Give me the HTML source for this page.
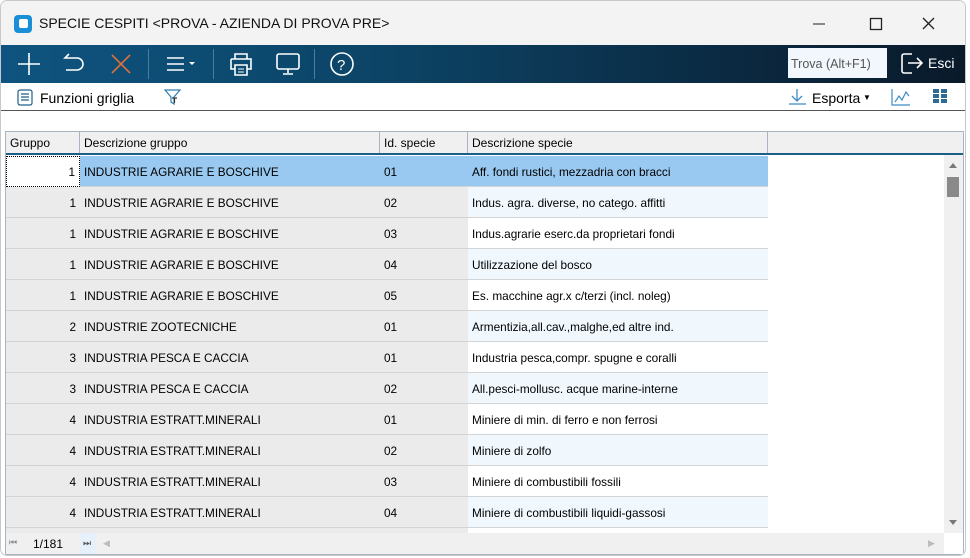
<!DOCTYPE html>
<html><head><meta charset="utf-8"><style>
*{box-sizing:border-box;margin:0;padding:0}
body{width:970px;height:558px;background:#fff;font-family:"Liberation Sans","DejaVu Sans",sans-serif;position:relative;overflow:hidden;color:#000}
.win{position:absolute;left:0;top:0;width:966px;height:556px;border:1px solid #c8c8c8;border-radius:7px;background:#fff;overflow:hidden}
.title{position:absolute;left:0;top:0;width:100%;height:44px;background:#f3f3f3}
.title .t{position:absolute;left:38px;top:14px;font-size:14px;color:#111}
.logo{position:absolute;left:13px;top:14px;width:18px;height:18px;background:#1a8fd8;border-radius:4px}
.logo:after{content:"";position:absolute;left:5px;top:4px;width:9px;height:9px;background:#fff;border-radius:2px}
.tb{position:absolute;left:0;top:44px;width:100%;height:38px;background:linear-gradient(90deg,#0e5480 0%,#0c4466 40%,#0b2a42 75%,#0a1a2a 100%)}
.sep{position:absolute;top:4px;width:1px;height:30px;background:#4f7c9a}
.trova{position:absolute;left:787px;top:3px;width:99px;height:30px;background:#f1f7fd;color:#555;font-size:12.5px;padding:9px 0 0 3px}
.esci{position:absolute;left:927px;top:10px;color:#fff;font-size:14px}
.bar2{position:absolute;left:0;top:82px;width:100%;height:28px;border-bottom:1px solid #555;background:#fff;font-size:14px}
.grid{position:absolute;left:4px;top:130px;width:959px;height:424px;border:1px solid #a9b4c2;background:#fff;overflow:hidden}
.hdr{position:absolute;left:0;top:0;height:23px;width:100%;background:#f0f0f0;border-bottom:2px solid #1c5f86}
.hc{position:absolute;top:0;height:21px;border-right:1px solid #a9b4c2;font-size:12px;padding:4px 0 0 4px}
.row{position:absolute;left:0;width:763px;height:31px;font-size:11.8px}
.c{position:absolute;top:0;height:31px;border-bottom:1px solid #d4d4d4;padding-top:9px;background:#ebebeb;white-space:nowrap;overflow:hidden}
.sb{position:absolute;right:0;top:23px;width:19px;height:378px;background:#f0f0f0}
.foot{position:absolute;left:0;top:401px;width:100%;height:22px;background:#f0f0f0;font-size:12px;z-index:2}
</style></head><body><div class="win">
<div class="title"><div class="logo"></div><div class="t">SPECIE CESPITI &lt;PROVA - AZIENDA DI PROVA PRE&gt;</div>
<svg style="position:absolute;left:810px;top:14px" width="140" height="18"><line x1="2" y1="9" x2="14" y2="9" stroke="#222"/><rect x="59.5" y="3.5" width="11" height="11" fill="none" stroke="#222" stroke-width="1.3"/><path d="M112 3l11 11M123 3l-11 11" stroke="#222" stroke-width="1.3"/></svg></div>
<div class="tb">
<svg width="380" height="38" style="position:absolute;left:0;top:0" fill="none" stroke="#fff" stroke-width="1.6">
<path d="M28 8v22M17 19h22"/>
<path d="M68 13h-4l4-4M64 13h12a6 6 0 0 1 0 12h-11"/>
<path d="M111 10l18 18M129 10l-18 18" stroke="#e0703a"/>
<path d="M166 13h17M166 19h17M166 25h17"/><path d="M188 17h6l-3 3z" fill="#fff" stroke="none"/>
<path d="M234 14v-5h12v5M230 14h20v10h-4M234 24h-4v-10M234 20h12v10h-12z"/><path d="M237 24h6M237 27h6" stroke-width="1"/>
<rect x="276" y="9" width="22" height="15" rx="2"/><path d="M287 24v4M282 29h10"/>
<circle cx="341" cy="19" r="11"/><text x="336" y="25" fill="#fff" stroke="none" font-size="15" font-family="Liberation Sans">?</text>
</svg>
<div class="sep" style="left:147px"></div><div class="sep" style="left:212px"></div><div class="sep" style="left:313px"></div>
<div class="trova">Trova (Alt+F1)</div>
<svg style="position:absolute;left:899px;top:7px" width="26" height="24" fill="none" stroke="#fff" stroke-width="1.6"><path d="M12 2H4a2 2 0 0 0-2 2v15a2 2 0 0 0 2 2h8"/><path d="M8 11h14M17 6l5 5-5 5"/></svg>
<div class="esci">Esci</div></div>
<div class="bar2">
<svg style="position:absolute;left:16px;top:6px" width="16" height="17" fill="none" stroke="#1f5f8a" stroke-width="1.2"><rect x="1" y="1" width="14" height="15" rx="2"/><path d="M4 5h8M4 8h8M4 11h8"/></svg>
<span style="position:absolute;left:39px;top:7px">Funzioni griglia</span>
<svg style="position:absolute;left:163px;top:5px" width="18" height="18" fill="none" stroke="#2f7fb0" stroke-width="1.2"><path d="M1 2h15l-6 7v7l-3-2V9z"/><path d="M8 10h5M10.5 10v5" stroke="#333"/></svg>
<svg style="position:absolute;left:787px;top:5px" width="20" height="18" fill="none" stroke="#3b8cc4" stroke-width="1.3"><path d="M9 1v12M4 8l5 5 5-5M1 16h17"/></svg>
<span style="position:absolute;left:811px;top:7px">Esporta</span><span style="position:absolute;left:862px;top:10px;font-size:8px">▼</span>
<svg style="position:absolute;left:890px;top:5px" width="20" height="18" fill="none" stroke="#3b8cc4" stroke-width="1.2"><path d="M1 1v16h18M4 14l4-6 3 4 4-8 3 4"/></svg>
<svg style="position:absolute;left:932px;top:6px" width="16" height="16" fill="#2d6b95"><rect x="0" y="0" width="6" height="4"/><rect x="8" y="0" width="6" height="4"/><rect x="0" y="5" width="6" height="4"/><rect x="8" y="5" width="6" height="4"/><rect x="0" y="10" width="6" height="4"/><rect x="8" y="10" width="6" height="4"/></svg>
</div>
<div class="grid">
<div class="hdr">
<div class="hc" style="left:0;width:74px">Gruppo</div>
<div class="hc" style="left:74px;width:300px">Descrizione gruppo</div>
<div class="hc" style="left:374px;width:88px">Id. specie</div>
<div class="hc" style="left:462px;width:300px">Descrizione specie</div>
</div>
<div id="rows"></div>
<div class="sb"><div style="position:absolute;left:5px;top:8px;border:4px solid transparent;border-bottom:5px solid #777;border-top:0"></div><div style="position:absolute;left:3px;top:22px;width:12px;height:20px;background:#8a8a8a"></div><div style="position:absolute;left:5px;bottom:8px;border:4px solid transparent;border-top:5px solid #777;border-bottom:0"></div></div>
<div class="foot"><span style="position:absolute;left:3px;top:4px;font-size:9px;color:#888">⏮</span><span style="position:absolute;left:27px;top:4px">1/181</span><span style="position:absolute;left:74px;top:0;width:16px;height:22px;background:#e6f0fa;font-size:9px;color:#555;padding:5px 0 0 3px">⏭</span><span style="position:absolute;left:97px;top:5px;font-size:9px;color:#bbb">◀</span><span style="position:absolute;left:922px;top:5px;font-size:9px;color:#bbb">▶</span><div style="position:absolute;right:0;top:0;width:19px;height:22px;background:#fff"></div></div>
</div>
</div>
<script>
var d=[[1,"INDUSTRIE AGRARIE E BOSCHIVE","01","Aff. fondi rustici, mezzadria con bracci"],[1,"INDUSTRIE AGRARIE E BOSCHIVE","02","Indus. agra. diverse, no catego. affitti"],[1,"INDUSTRIE AGRARIE E BOSCHIVE","03","Indus.agrarie eserc.da proprietari fondi"],[1,"INDUSTRIE AGRARIE E BOSCHIVE","04","Utilizzazione del bosco"],[1,"INDUSTRIE AGRARIE E BOSCHIVE","05","Es. macchine agr.x c/terzi (incl. noleg)"],[2,"INDUSTRIE ZOOTECNICHE","01","Armentizia,all.cav.,malghe,ed altre ind."],[3,"INDUSTRIA PESCA E CACCIA","01","Industria pesca,compr. spugne e coralli"],[3,"INDUSTRIA PESCA E CACCIA","02","All.pesci-mollusc. acque marine-interne"],[4,"INDUSTRIA ESTRATT.MINERALI","01","Miniere di min. di ferro e non ferrosi"],[4,"INDUSTRIA ESTRATT.MINERALI","02","Miniere di zolfo"],[4,"INDUSTRIA ESTRATT.MINERALI","03","Miniere di combustibili fossili"],[4,"INDUSTRIA ESTRATT.MINERALI","04","Miniere di combustibili liquidi-gassosi"],[4,"INDUSTRIA ESTRATT.MINERALI","05",""]];
var h="";d.forEach(function(r,i){var top=24+i*31;var sel=i==0;var bg=sel?"#99c9f0":"#ebebeb";var b4=sel?"#99c9f0":(i%2?"#f0f8fe":"#fff");
h+='<div class="row" style="top:'+top+'px">'+
'<div class="c" style="left:0;width:74px;text-align:right;padding-right:4px;background:'+(sel?"#fff;border:1px dotted #000;padding-top:8px":bg)+'">'+r[0]+'</div>'+
'<div class="c" style="left:74px;width:300px;padding-left:4px;background:'+bg+'">'+r[1]+'</div>'+
'<div class="c" style="left:374px;width:88px;padding-left:4px;background:'+bg+'">'+r[2]+'</div>'+
'<div class="c" style="left:462px;width:300px;padding-left:4px;background:'+b4+'">'+r[3]+'</div></div>';});
document.getElementById("rows").innerHTML=h;
</script>
</body></html>
